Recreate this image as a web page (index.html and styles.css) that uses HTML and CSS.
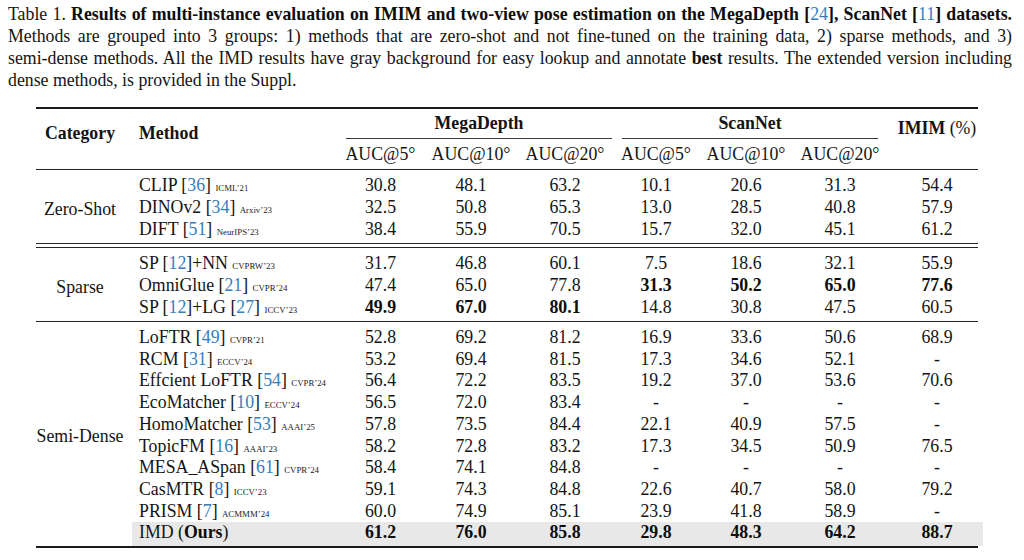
FILE: index.html
```html
<!DOCTYPE html>
<html lang="en">
<head>
<meta charset="utf-8">
<title>Table 1</title>
<link rel="stylesheet" href="styles.css">
</head>
<body>
<p class="caption">
  <span class="ln">Table 1. <b>Results of multi-instance evaluation on IMIM and two-view pose estimation on the MegaDepth [<span class="cite">24</span>], ScanNet [<span class="cite">11</span>] datasets.</b></span>
  <span class="ln">Methods are grouped into 3 groups: 1) methods that are zero-shot and not fine-tuned on the training data, 2) sparse methods, and 3)</span>
  <span class="ln">semi-dense methods. All the IMD results have gray background for easy lookup and annotate <b>best</b> results. The extended version including</span>
  <span class="ln last">dense methods, is provided in the Suppl.</span>
</p>

<table class="results">
  <colgroup>
    <col class="c-cat"><col class="c-method">
    <col class="c-md5"><col class="c-md10"><col class="c-md20">
    <col class="c-sn5"><col class="c-sn10"><col class="c-sn20">
    <col class="c-imim">
  </colgroup>
  <thead>
    <tr class="h1">
      <th rowspan="2" class="hd cat-h">Category</th>
      <th rowspan="2" class="hd method-h">Method</th>
      <th colspan="3" class="grp"><div class="cmid md">MegaDepth</div></th>
      <th colspan="3" class="grp"><div class="cmid sn">ScanNet</div></th>
      <th rowspan="2" class="hd imim-h">IMIM <span class="reg">(%)</span></th>
    </tr>
    <tr class="h2">
      <th>AUC@5°</th><th>AUC@10°</th><th>AUC@20°</th>
      <th>AUC@5°</th><th>AUC@10°</th><th>AUC@20°</th>
    </tr>
  </thead>

  <tbody class="zero">
    <tr class="first">
      <td rowspan="3" class="cat">Zero-Shot</td>
      <td class="method">CLIP [<span class="cite">36</span>] <span class="venue">ICML’21</span></td>
      <td>30.8</td><td>48.1</td><td>63.2</td><td>10.1</td><td>20.6</td><td>31.3</td><td class="imim">54.4</td>
    </tr>
    <tr>
      <td class="method">DINOv2 [<span class="cite">34</span>] <span class="venue">Arxiv’23</span></td>
      <td>32.5</td><td>50.8</td><td>65.3</td><td>13.0</td><td>28.5</td><td>40.8</td><td class="imim">57.9</td>
    </tr>
    <tr class="last">
      <td class="method">DIFT [<span class="cite">51</span>] <span class="venue">NeurIPS’23</span></td>
      <td>38.4</td><td>55.9</td><td>70.5</td><td>15.7</td><td>32.0</td><td>45.1</td><td class="imim">61.2</td>
    </tr>
    <tr class="dbl"><td colspan="9"></td></tr>
  </tbody>

  <tbody class="sparse">
    <tr class="first">
      <td rowspan="3" class="cat">Sparse</td>
      <td class="method">SP [<span class="cite">12</span>]+NN <span class="venue">CVPRW’23</span></td>
      <td>31.7</td><td>46.8</td><td>60.1</td><td>7.5</td><td>18.6</td><td>32.1</td><td class="imim">55.9</td>
    </tr>
    <tr>
      <td class="method">OmniGlue [<span class="cite">21</span>] <span class="venue">CVPR’24</span></td>
      <td>47.4</td><td>65.0</td><td>77.8</td><td><b>31.3</b></td><td><b>50.2</b></td><td><b>65.0</b></td><td class="imim"><b>77.6</b></td>
    </tr>
    <tr class="last">
      <td class="method">SP [<span class="cite">12</span>]+LG [<span class="cite">27</span>] <span class="venue">ICCV’23</span></td>
      <td><b>49.9</b></td><td><b>67.0</b></td><td><b>80.1</b></td><td>14.8</td><td>30.8</td><td>47.5</td><td class="imim">60.5</td>
    </tr>
  </tbody>

  <tbody class="semi">
    <tr class="first">
      <td rowspan="10" class="cat">Semi-Dense</td>
      <td class="method">LoFTR [<span class="cite">49</span>] <span class="venue">CVPR’21</span></td>
      <td>52.8</td><td>69.2</td><td>81.2</td><td>16.9</td><td>33.6</td><td>50.6</td><td class="imim">68.9</td>
    </tr>
    <tr>
      <td class="method">RCM [<span class="cite">31</span>] <span class="venue">ECCV’24</span></td>
      <td>53.2</td><td>69.4</td><td>81.5</td><td>17.3</td><td>34.6</td><td>52.1</td><td class="imim">-</td>
    </tr>
    <tr>
      <td class="method">Effcient LoFTR [<span class="cite">54</span>] <span class="venue">CVPR’24</span></td>
      <td>56.4</td><td>72.2</td><td>83.5</td><td>19.2</td><td>37.0</td><td>53.6</td><td class="imim">70.6</td>
    </tr>
    <tr>
      <td class="method">EcoMatcher [<span class="cite">10</span>] <span class="venue">ECCV’24</span></td>
      <td>56.5</td><td>72.0</td><td>83.4</td><td>-</td><td>-</td><td>-</td><td class="imim">-</td>
    </tr>
    <tr>
      <td class="method">HomoMatcher [<span class="cite">53</span>] <span class="venue">AAAI’25</span></td>
      <td>57.8</td><td>73.5</td><td>84.4</td><td>22.1</td><td>40.9</td><td>57.5</td><td class="imim">-</td>
    </tr>
    <tr>
      <td class="method">TopicFM [<span class="cite">16</span>] <span class="venue">AAAI’23</span></td>
      <td>58.2</td><td>72.8</td><td>83.2</td><td>17.3</td><td>34.5</td><td>50.9</td><td class="imim">76.5</td>
    </tr>
    <tr>
      <td class="method">MESA_ASpan [<span class="cite">61</span>] <span class="venue">CVPR’24</span></td>
      <td>58.4</td><td>74.1</td><td>84.8</td><td>-</td><td>-</td><td>-</td><td class="imim">-</td>
    </tr>
    <tr>
      <td class="method">CasMTR [<span class="cite">8</span>] <span class="venue">ICCV’23</span></td>
      <td>59.1</td><td>74.3</td><td>84.8</td><td>22.6</td><td>40.7</td><td>58.0</td><td class="imim">79.2</td>
    </tr>
    <tr>
      <td class="method">PRISM [<span class="cite">7</span>] <span class="venue">ACMMM’24</span></td>
      <td>60.0</td><td>74.9</td><td>85.1</td><td>23.9</td><td>41.8</td><td>58.9</td><td class="imim">-</td>
    </tr>
    <tr class="ours">
      <td class="method">IMD (<b>Ours</b>)</td>
      <td><b>61.2</b></td><td><b>76.0</b></td><td><b>85.8</b></td><td><b>29.8</b></td><td><b>48.3</b></td><td><b>64.2</b></td><td class="imim"><b>88.7</b></td>
    </tr>
  </tbody>
</table>
</body>
</html>
```

FILE: styles.css
```css
html, body {
  margin: 0;
  padding: 0;
  background: #ffffff;
}

body {
  color: #141414;
  font-family: "Liberation Serif", "Times New Roman", serif;
  font-size: 17.8px;
  width: 1024px;
  height: 560px;
  overflow: hidden;
}

b {
  font-weight: bold;
  color: #0d0d0d;
}

.cite {
  color: #367dbd;
  font-weight: normal;
}

/* ---------- caption ---------- */
.caption {
  margin: 0;
  padding: 3px 12px 0 8px;
  line-height: 22px;
}

.caption .ln {
  display: block;
  text-align: justify;
  text-align-last: justify;
}

.caption .ln.last {
  text-align-last: left;
}

/* ---------- table ---------- */
.results {
  margin: 16px 0 0 36px;
  width: 942px;
  table-layout: fixed;
  border-collapse: separate;
  border-spacing: 0;
  border-top: 2px solid #1a1a1a;
  border-bottom: 2px solid #1a1a1a;
  line-height: 22px;
}

.c-cat { width: 96px; }
.c-method { width: 205px; }
.c-md5 { width: 87px; }
.c-md10 { width: 94px; }
.c-md20 { width: 94px; }
.c-sn5 { width: 88px; }
.c-sn10 { width: 92px; }
.c-sn20 { width: 96px; }
.c-imim { width: 90px; }

.results th,
.results td {
  padding: 0;
  text-align: center;
  font-weight: normal;
  white-space: nowrap;
}

/* header */
.results th.hd {
  font-weight: bold;
  vertical-align: top;
  border-bottom: 1px solid #262626;
}

.results th.cat-h {
  padding: 13px 8px 0 0;
}

.results th.method-h {
  text-align: left;
  padding: 13px 0 0 7px;
}

.results th.imim-h {
  padding: 8px 0 0 8px;
}

.reg {
  font-weight: normal;
}

.results th.grp {
  font-weight: bold;
  padding-top: 3px;
}

.cmid {
  padding-bottom: 4px;
  border-bottom: 1px solid #3a3a3a;
}

.cmid.md {
  margin-left: 9px;
}

.cmid.sn {
  margin: 0 10px;
}

.results tr.h2 th {
  padding: 4px 0 4px;
  border-bottom: 1px solid #262626;
}

/* body */
.results td.cat {
  padding-right: 8px;
  vertical-align: middle;
}

.results td.method {
  text-align: left;
  padding-left: 7px;
}

.results td.imim {
  padding-left: 8px;
}

.venue {
  font-size: 8.8px;
  line-height: 0;
  color: #1a1a1a;
}

.results tr.first td {
  padding-top: 4px;
}

.results tr.last td {
  padding-bottom: 3px;
}

.results tr.dbl td {
  height: 5px;
  box-sizing: border-box;
  padding: 0;
  line-height: 0;
  font-size: 0;
  border-top: 1px solid #262626;
  border-bottom: 1px solid #262626;
}

.sparse tr.last td,
.sparse td.cat {
  border-bottom: 1px solid #262626;
}

.semi tr {
  line-height: 21.7px;
}

.semi tr.first td {
  padding-top: 5px;
}

.results tr.ours td {
  background: #e8e8e8;
  padding-bottom: 2px;
}

.results tr.ours td:last-child {
  box-shadow: 5px 0 0 #e8e8e8;
}
```
